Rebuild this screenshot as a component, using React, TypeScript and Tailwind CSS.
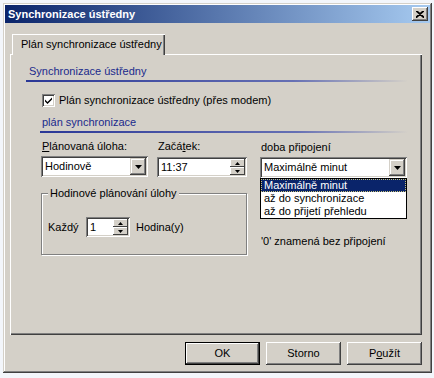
import React from "react";

function Arrow({ up = false }: { up?: boolean }) {
  return (
    <svg width="7" height="4" viewBox="0 0 7 4">
      <path d={up ? "M3.5 0L7 4H0z" : "M0 0h7L3.5 4z"} fill="#000" />
    </svg>
  );
}

function SmallArrow({ up = false }: { up?: boolean }) {
  return (
    <svg width="5" height="3" viewBox="0 0 5 3">
      <path d={up ? "M2.5 0L5 3H0z" : "M0 0h5L2.5 3z"} fill="#000" />
    </svg>
  );
}

function Combo({ value }: { value: string }) {
  return (
    <div className="h-[21px] w-full bg-white flex items-center p-[2px] shadow-[inset_1px_1px_0_#808080,inset_-1px_-1px_0_#ffffff,inset_2px_2px_0_#404040,inset_-2px_-2px_0_#d4d0c8]">
      <span className="flex-1 pl-[2px] whitespace-nowrap">{value}</span>
      <div className="w-[16px] h-[17px] bg-[#d4d0c8] flex items-center justify-center shadow-[inset_-1px_-1px_0_#404040,inset_1px_1px_0_#d4d0c8,inset_-2px_-2px_0_#808080,inset_2px_2px_0_#ffffff]">
        <Arrow />
      </div>
    </div>
  );
}

function Spin({ value, w }: { value: string; w: string }) {
  return (
    <div
      className={`${w} h-[20px] bg-white flex items-center p-[2px] shadow-[inset_1px_1px_0_#808080,inset_-1px_-1px_0_#ffffff,inset_2px_2px_0_#404040,inset_-2px_-2px_0_#d4d0c8]`}
    >
      <span className="flex-1 pl-[2px] pt-[1px]">{value}</span>
      <div className="w-[15px] h-[16px] flex flex-col">
        <div className="h-[8px] bg-[#d4d0c8] flex items-center justify-center shadow-[inset_-1px_-1px_0_#404040,inset_1px_1px_0_#ffffff]">
          <SmallArrow up />
        </div>
        <div className="h-[8px] bg-[#d4d0c8] flex items-center justify-center shadow-[inset_-1px_-1px_0_#404040,inset_1px_1px_0_#ffffff]">
          <SmallArrow />
        </div>
      </div>
    </div>
  );
}

function Button({ children, isDefault = false }: { children: React.ReactNode; isDefault?: boolean }) {
  return (
    <div
      className={
        isDefault
          ? "w-[75px] h-[23px] bg-[#d4d0c8] flex items-center justify-center border border-black shadow-[inset_-1px_-1px_0_#404040,inset_1px_1px_0_#ffffff,inset_-2px_-2px_0_#808080]"
          : "w-[75px] h-[23px] bg-[#d4d0c8] flex items-center justify-center shadow-[inset_-1px_-1px_0_#404040,inset_1px_1px_0_#ffffff,inset_-2px_-2px_0_#808080,inset_2px_2px_0_#d4d0c8]"
      }
    >
      {children}
    </div>
  );
}

export default function App() {
  return (
    <div className="w-[434px] h-[378px] bg-[#f3f6fb] pl-[3px] pt-[3px] font-['Liberation_Sans',Arial,sans-serif] text-[11px] leading-[13px] text-black">
      <div className="w-[429px] h-[370px] bg-[#d4d0c8] p-[2px] flex flex-col shadow-[inset_-1px_-1px_0_#404040,inset_1px_1px_0_#d4d0c8,inset_-2px_-2px_0_#808080,inset_2px_2px_0_#ffffff]">
        {/* title bar */}
        <div className="h-[18px] flex items-center justify-between pl-[3px] pr-[2px] bg-[linear-gradient(to_right,#0a246a,#a6caf0)]">
          <span className="font-bold text-white">Synchronizace ústředny</span>
          <div className="w-[16px] h-[14px] bg-[#d4d0c8] flex items-center justify-center shadow-[inset_-1px_-1px_0_#404040,inset_1px_1px_0_#ffffff,inset_-2px_-2px_0_#808080]">
            <svg width="8" height="7" viewBox="0 0 8 7">
              <path d="M0 0L8 7M8 0L0 7M1 0L8 6M7 0L0 6" stroke="#000" strokeWidth="1.2" fill="none" />
            </svg>
          </div>
        </div>

        {/* tab header */}
        <div className="mt-[11px] ml-[7px] relative z-10 mb-[-1px] w-[153px] h-[21px] bg-[#d4d0c8] flex items-center pl-[9px] pb-[1px] shadow-[inset_1px_1px_0_#ffffff,inset_-1px_0_0_#404040,inset_-2px_0_0_#808080]">
          Plán synchronizace ústředny
        </div>

        {/* tab panel */}
        <div className="ml-[5px] w-[412px] h-[281px] flex flex-col shadow-[inset_1px_1px_0_#ffffff,inset_-1px_-1px_0_#404040,inset_-2px_-2px_0_#808080]">
          <div className="mt-[11px] ml-[16px]">
            <div className="pl-[3px] text-[#1a2a8c]">Synchronizace ústředny</div>
            <div className="mt-[2px] h-[2px] w-[382px] bg-[linear-gradient(to_right,#2a3796,#6670b4_70%,#d4d0c8)]" />
          </div>

          <div className="mt-[12px] ml-[32px] flex items-center gap-[4px]">
            <div className="w-[13px] h-[13px] bg-white flex items-center justify-center shadow-[inset_1px_1px_0_#808080,inset_-1px_-1px_0_#ffffff,inset_2px_2px_0_#404040,inset_-2px_-2px_0_#d4d0c8]">
              <svg width="7" height="7" viewBox="0 0 7 7">
                <path d="M0 2.5L2.5 5L7 0.5V2.5L2.5 7L0 4.5z" fill="#000" />
              </svg>
            </div>
            <span>Plán synchronizace ústředny (přes modem)</span>
          </div>

          <div className="mt-[9px] ml-[30px]">
            <div className="pl-[2px] text-[#1a2a8c]">plán synchronizace</div>
            <div className="mt-[2px] h-[2px] w-[368px] bg-[linear-gradient(to_right,#2a3796,#6670b4_70%,#d4d0c8)]" />
          </div>

          <div className="mt-[7px] ml-[31px] flex">
            <div className="w-[206px] flex flex-col">
              <div className="flex">
                <span className="w-[116px] pl-[1px]">
                  <span className="underline">P</span>lánovaná úloha:
                </span>
                <span className="pl-[1px]">
                  Zač<span>á</span>
                  <span className="underline">t</span>ek:
                </span>
              </div>
              <div className="mt-[3px] flex items-start">
                <div className="w-[107px]">
                  <Combo value="Hodinově" />
                </div>
                <div className="ml-[9px] mt-[1px]">
                  <Spin value="11:37" w="w-[90px]" />
                </div>
              </div>

              <div className="mt-[16px] relative h-[62px] w-[206px] border border-[#808080] shadow-[1px_1px_0_#ffffff,inset_1px_1px_0_#ffffff]">
                <span className="absolute -top-[7px] left-[6px] px-[2px] bg-[#d4d0c8]">
                  Hodinové plánování úlohy
                </span>
                <div className="mt-[23px] ml-[6px] flex items-center">
                  <span className="w-[38px]">Každý</span>
                  <Spin value="1" w="w-[44px]" />
                  <span className="ml-[6px]">Hodina(y)</span>
                </div>
              </div>
            </div>

            <div className="ml-[13px] w-[147px] flex flex-col">
              <span className="pl-[1px] mt-[1px]">doba připojení</span>
              <div className="mt-[3px]">
                <Combo value="Maximálně minut" />
              </div>
              <div className="h-[41px] bg-white border border-black flex flex-col">
                <div className="h-[13px] bg-[#0a246a] text-white pl-[2px] border border-dotted border-[#c9c27a]">
                  <span className="relative -top-[1px]">Maximálně minut</span>
                </div>
                <div className="h-[13px] pl-[3px]">až do synchronizace</div>
                <div className="h-[13px] pl-[3px]">až do přijetí přehledu</div>
              </div>
              <span className="mt-[16px] pl-[1px]">'0' znamená bez připojení</span>
            </div>
          </div>
        </div>

        {/* buttons */}
        <div className="mt-[7px] flex justify-end gap-[6px] pr-[8px]">
          <Button isDefault>OK</Button>
          <Button>Storno</Button>
          <Button>
            <span>
              P<span className="underline">o</span>užít
            </span>
          </Button>
        </div>
      </div>
    </div>
  );
}
